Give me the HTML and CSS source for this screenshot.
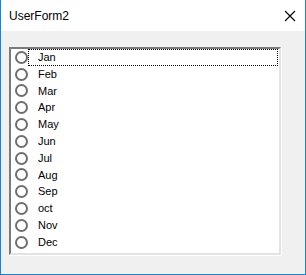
FILE: index.html
```html
<!DOCTYPE html>
<html>
<head>
<meta charset="utf-8">
<link rel="stylesheet" href="styles.css">
</head>
<body>
<div class="window">
  <div class="titlebar">
    <span class="title">UserForm2</span>
    <svg class="close" width="12" height="12" viewBox="0 0 12 12"><path d="M1 1 L11 11 M11 1 L1 11" stroke="#000" stroke-width="1.1" fill="none"/></svg>
  </div>
  <div class="client">
    <div class="listbox">
      <div class="row"><span class="radio"></span><span class="label focus">Jan</span></div>
      <div class="row"><span class="radio"></span><span class="label">Feb</span></div>
      <div class="row"><span class="radio"></span><span class="label">Mar</span></div>
      <div class="row"><span class="radio"></span><span class="label">Apr</span></div>
      <div class="row"><span class="radio"></span><span class="label">May</span></div>
      <div class="row"><span class="radio"></span><span class="label">Jun</span></div>
      <div class="row"><span class="radio"></span><span class="label">Jul</span></div>
      <div class="row"><span class="radio"></span><span class="label">Aug</span></div>
      <div class="row"><span class="radio"></span><span class="label">Sep</span></div>
      <div class="row"><span class="radio"></span><span class="label">oct</span></div>
      <div class="row"><span class="radio"></span><span class="label">Nov</span></div>
      <div class="row"><span class="radio"></span><span class="label">Dec</span></div>
    </div>
  </div>
</div>
</body>
</html>
```
FILE: styles.css
```css
html, body {
  margin: 0;
  padding: 0;
  background: #ffffff;
}
.window {
  width: 306px;
  height: 275px;
  box-sizing: border-box;
  border: 1px solid #1883d7;
  border-top: none;
  display: flex;
  flex-direction: column;
  font-family: "Liberation Sans", Arial, sans-serif;
}
.titlebar {
  height: 31px;
  flex: none;
  background: #ffffff;
  display: flex;
  align-items: center;
  justify-content: space-between;
  padding: 0 9px 0 8px;
  box-sizing: border-box;
}
.title {
  font-family: "Liberation Sans", Arial, sans-serif;
  font-size: 12px;
  color: #000;
  padding-top: 1px;
}
.close {
  display: block;
  margin-top: 1px;
}
.client {
  flex: 1;
  background: #f0f0f0;
  padding: 16px 0 0 8px;
}
.listbox {
  width: 272px;
  height: 208px;
  box-sizing: border-box;
  background: #fff;
  border-style: solid;
  border-width: 2px;
  border-color: #7a7a7a #e3e3e3 #e3e3e3 #7a7a7a;
  box-shadow: 1px 1px 0 #ffffff;
}
.row {
  height: 16.8px;
  display: flex;
  align-items: center;
}
.radio {
  flex: none;
  width: 13px;
  height: 13px;
  box-sizing: border-box;
  border: 2px solid #6e6e6e;
  border-radius: 50%;
  margin-left: 4px;
  background: #fff;
}
.label {
  flex: 1;
  margin-left: 0;
  margin-right: 1px;
  height: 16.8px;
  line-height: 15px;
  box-sizing: border-box;
  padding-left: 9px;
  font-size: 11px;
  color: #000;
  border: 1px solid transparent;
}
.label.focus {
  border: 1px dotted #000;
}
```
